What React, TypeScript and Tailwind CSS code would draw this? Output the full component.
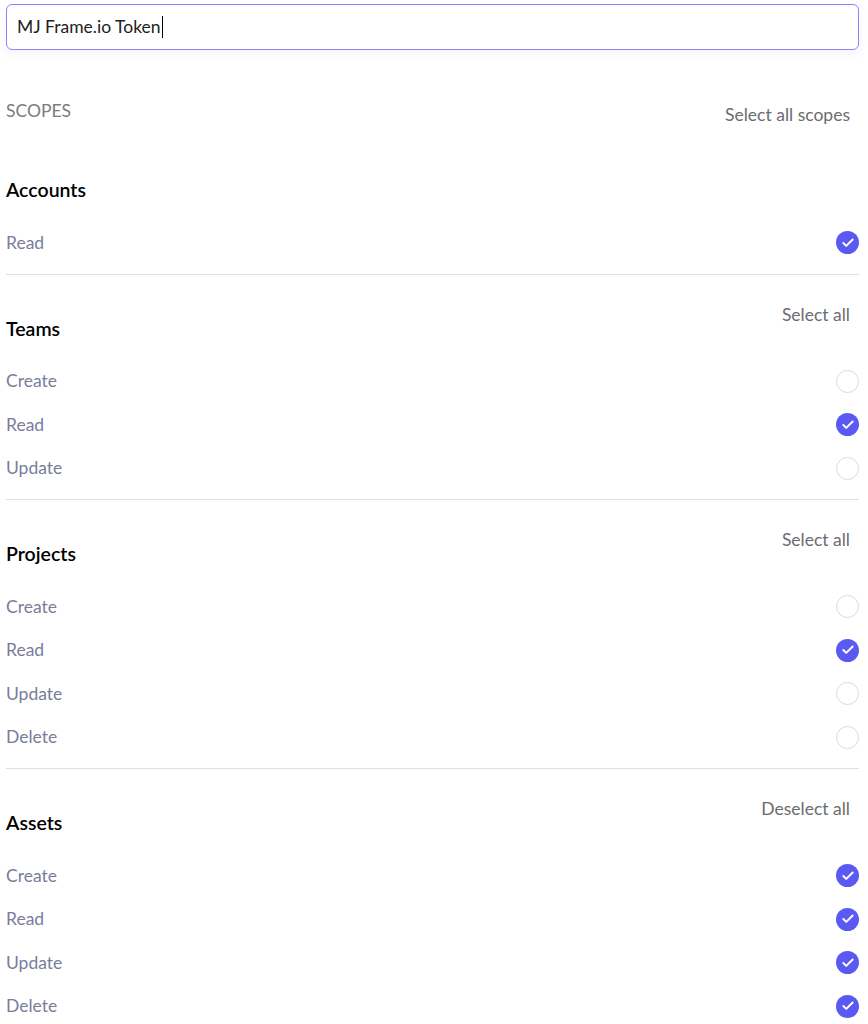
import { Check } from 'lucide-react';

type Scope = { label: string; checked: boolean };
type Group = { name: string; action?: string; scopes: Scope[] };

const GROUPS: Group[] = [
  { name: 'Accounts', scopes: [{ label: 'Read', checked: true }] },
  {
    name: 'Teams',
    action: 'Select all',
    scopes: [
      { label: 'Create', checked: false },
      { label: 'Read', checked: true },
      { label: 'Update', checked: false },
    ],
  },
  {
    name: 'Projects',
    action: 'Select all',
    scopes: [
      { label: 'Create', checked: false },
      { label: 'Read', checked: true },
      { label: 'Update', checked: false },
      { label: 'Delete', checked: false },
    ],
  },
  {
    name: 'Assets',
    action: 'Deselect all',
    scopes: [
      { label: 'Create', checked: true },
      { label: 'Read', checked: true },
      { label: 'Update', checked: true },
      { label: 'Delete', checked: true },
    ],
  },
];

function RoundCheck({ checked }: { checked: boolean }) {
  if (!checked) {
    return <span className="block h-[23px] w-[23px] rounded-full border-[1.5px] border-[#d9dae3] bg-white" />;
  }
  return (
    <span className="flex h-[23px] w-[23px] items-center justify-center rounded-full bg-[#5a59f2]">
      <Check className="h-[14px] w-[14px] text-white" strokeWidth={3.4} />
    </span>
  );
}

function ScopeGroup({ group, first }: { group: Group; first: boolean }) {
  return (
    <section className={first ? '' : 'pt-[30px]'}>
      <div className="flex items-start justify-between">
        <h3 className={`text-[19.5px] font-semibold leading-[24px] text-black ${first ? '' : 'mt-[12px]'}`}>
          {group.name}
        </h3>
        {group.action && (
          <button type="button" className="pr-[9px] text-[17.5px] leading-[20px] text-[#6c6c70]">
            {group.action}
          </button>
        )}
      </div>
      <ul className="mt-[19px]">
        {group.scopes.map((s) => (
          <li key={s.label} className="flex h-[43.5px] items-center justify-between">
            <span className="text-[17.5px] text-[#797d9b]">{s.label}</span>
            <RoundCheck checked={s.checked} />
          </li>
        ))}
      </ul>
      <div className="mt-[9px] h-px bg-[#dcdee8]" />
    </section>
  );
}

export default function App() {
  return (
    <div
      className="relative min-h-[1024px] overflow-hidden bg-white pl-[6px] pr-[9px] pt-[4px]"
      style={{ fontFamily: 'Lato, "Noto Sans", sans-serif' }}
    >
      <div className="flex h-[46px] items-center rounded-[6px] border-[1.5px] border-[#8786fb] px-[10px] shadow-[0_4px_10px_rgba(120,120,220,0.08)]">
        <span className="text-[17.5px] text-[#222]">MJ Frame.io Token</span>
        <span className="ml-[1px] h-[22px] w-px bg-black" />
      </div>

      <div className="mt-[51px] flex items-start justify-between">
        <span className="text-[17.5px] leading-[20px] text-[#7b7b7d]">SCOPES</span>
        <button type="button" className="mt-[4px] pr-[9px] text-[17.5px] leading-[20px] text-[#6c6c70]">
          Select all scopes
        </button>
      </div>

      <div className="mt-[53px]">
        {GROUPS.map((g, i) => (
          <ScopeGroup key={g.name} group={g} first={i === 0} />
        ))}
      </div>

      <div className="pointer-events-none absolute inset-x-0 bottom-0 h-[10px] bg-gradient-to-b from-transparent to-[#ececee]" />
    </div>
  );
}
